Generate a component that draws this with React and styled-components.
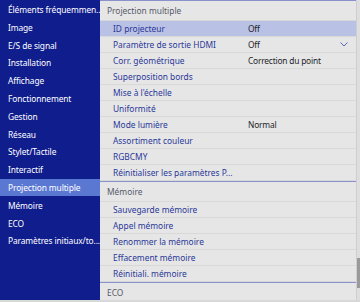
import styled, { createGlobalStyle } from "styled-components";

const menu = [
  "Éléments fréquemmen...",
  "Image",
  "E/S de signal",
  "Installation",
  "Affichage",
  "Fonctionnement",
  "Gestion",
  "Réseau",
  "Stylet/Tactile",
  "Interactif",
  "Projection multiple",
  "Mémoire",
  "ECO",
  "Paramètres initiaux/to...",
];

const sections = [
  {
    title: "Projection multiple",
    items: [
      { label: "ID projecteur", value: "Off", active: true },
      { label: "Paramètre de sortie HDMI", value: "Off", dropdown: true },
      { label: "Corr. géométrique", value: "Correction du point" },
      { label: "Superposition bords" },
      { label: "Mise à l'échelle" },
      { label: "Uniformité" },
      { label: "Mode lumière", value: "Normal" },
      { label: "Assortiment couleur" },
      { label: "RGBCMY" },
      { label: "Réinitialiser les paramètres P..." },
    ],
  },
  {
    title: "Mémoire",
    items: [
      { label: "Sauvegarde mémoire" },
      { label: "Appel mémoire" },
      { label: "Renommer la mémoire" },
      { label: "Effacement mémoire" },
      { label: "Réinitiali. mémoire" },
    ],
  },
  { title: "ECO", items: [] },
];

const Global = createGlobalStyle`
  html, body {
    margin: 0;
    padding: 0;
    background: #d8d8d8;
  }
  body {
    font-family: "Noto Sans", "Open Sans", sans-serif;
    font-size: 8.4px;
  }
`;

const Screen = styled.div`
  display: flex;
  width: 360px;
  height: 300px;
  overflow: hidden;
`;

const Sidebar = styled.nav`
  width: 100px;
  flex: none;
  background: #0f1d8d;
  padding-top: 0.6px;
  display: flex;
  flex-direction: column;
`;

const SideItem = styled.div`
  height: 17.8px;
  flex: none;
  display: flex;
  align-items: center;
  padding-left: 8px;
  color: #ffffff;
  white-space: nowrap;
  letter-spacing: -0.1px;
  background: ${(p) => (p.selected ? "#5a78d2" : "transparent")};
`;

const Content = styled.div`
  flex: 1;
  display: flex;
  flex-direction: column;
  background: #e6e6e6;
  border-right: 1px solid #cfcfcf;
`;

const SectionTitle = styled.div`
  height: 19px;
  flex: none;
  display: flex;
  align-items: center;
  padding-left: 7px;
  color: #555a66;
  border-top: 1px solid #8a92cc;
  border-bottom: 1px solid #d8d8d8;
`;

const Row = styled.div`
  height: 15px;
  flex: none;
  display: grid;
  grid-template-columns: 135px 1fr 16px;
  align-items: center;
  padding-left: 13px;
  color: #2a3899;
  background: ${(p) => (p.active ? "#b9c1e4" : "#e6e6e6")};
  border-bottom: 1px solid #d8d8d8;
  white-space: nowrap;
`;

const Value = styled.span`
  color: #1e1e2a;
  letter-spacing: -0.2px;
`;

const Chevron = styled.svg`
  width: 8px;
  height: 5px;
`;

const Scrollbar = styled.div`
  width: 3px;
  flex: none;
  background: #dedede;
  display: flex;
  flex-direction: column;
  padding-top: 258px;
`;

const Thumb = styled.div`
  height: 30px;
  background: #9a9a9a;
`;

export default function App() {
  return (
    <>
      <Global />
      <Screen>
        <Sidebar>
          {menu.map((m) => (
            <SideItem key={m} selected={m === "Projection multiple"}>
              {m}
            </SideItem>
          ))}
        </Sidebar>
        <Content>
          {sections.map((s) => (
            <div key={s.title}>
              <SectionTitle>{s.title}</SectionTitle>
              {s.items.map((it) => (
                <Row key={it.label} active={it.active}>
                  <span>{it.label}</span>
                  <Value>{it.value}</Value>
                  {it.dropdown ? (
                    <Chevron viewBox="0 0 8 5">
                      <path d="M0.5 0.5 L4 4 L7.5 0.5" fill="none" stroke="#5563b8" strokeWidth="1" />
                    </Chevron>
                  ) : (
                    <span />
                  )}
                </Row>
              ))}
            </div>
          ))}
        </Content>
        <Scrollbar>
          <Thumb />
        </Scrollbar>
      </Screen>
    </>
  );
}
